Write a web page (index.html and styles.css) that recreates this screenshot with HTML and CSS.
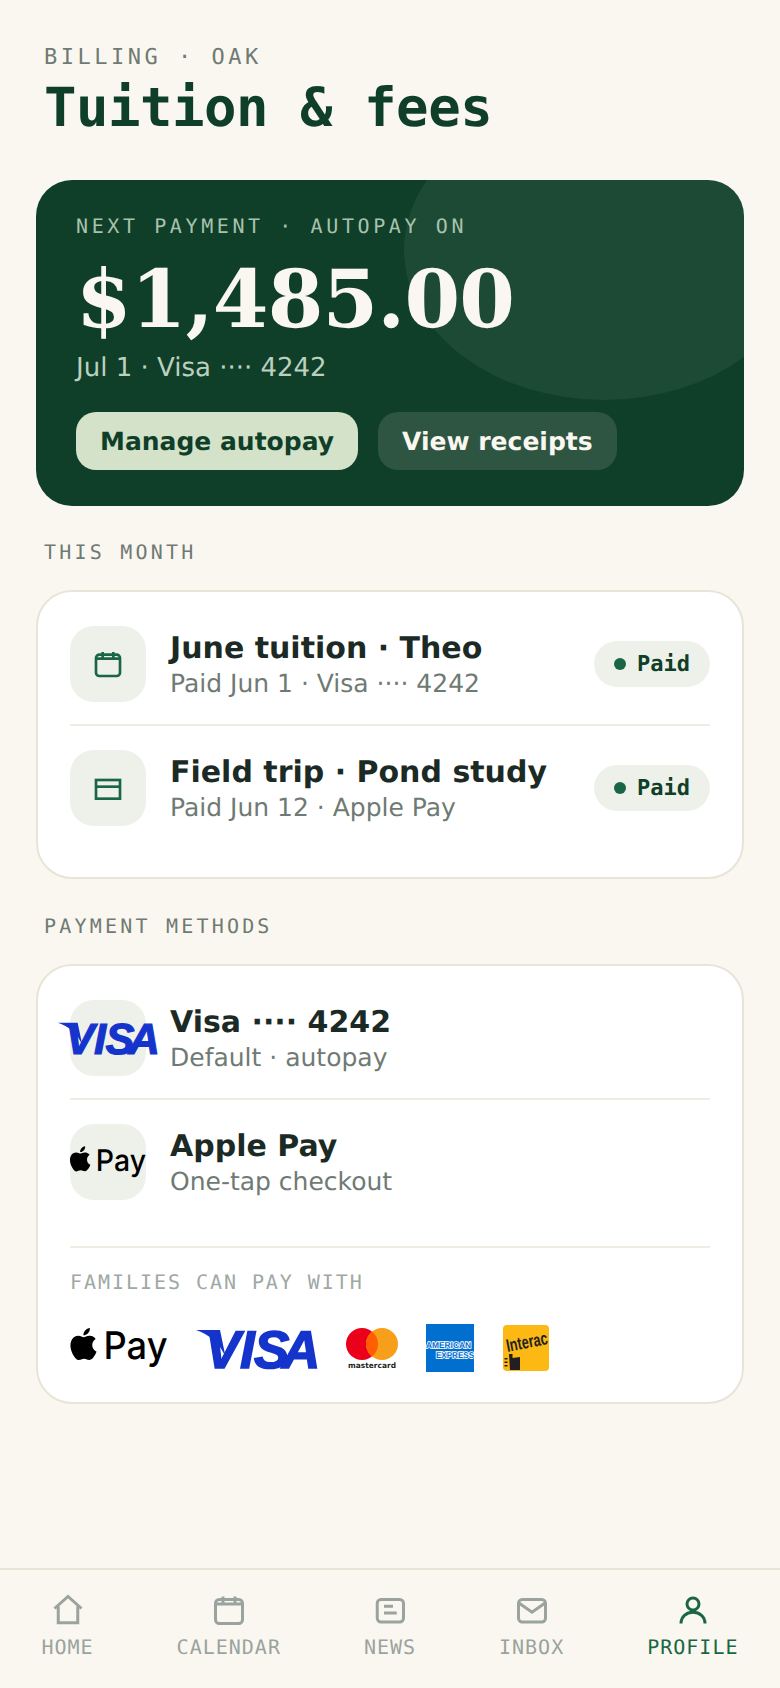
FILE: index.html
```html
<!DOCTYPE html>
<html lang="en">
<head>
    <meta charset="UTF-8">
    <title>Tuition &amp; fees</title>
    <meta name="viewport" content="width=device-width, initial-scale=1">
    <link rel="stylesheet" href="styles.css">
</head>
<body>
    <header class="page-head">
        <p class="eyebrow">BILLING · OAK</p>
        <h1>Tuition &amp; fees</h1>
    </header>

    <main class="content">
        <section class="hero">
            <div class="hero-blob"></div>
            <p class="hero-label">NEXT PAYMENT · AUTOPAY ON</p>
            <p class="hero-amount">$1,485.00</p>
            <p class="hero-sub">Jul 1 · Visa ···· 4242</p>
            <div class="hero-actions">
                <a class="btn btn-light">Manage autopay</a>
                <a class="btn btn-dark">View receipts</a>
            </div>
        </section>

        <h2 class="section-label">THIS MONTH</h2>
        <section class="card card-month">
            <div class="row">
                <div class="row-icon">
                    <svg class="icon-row" viewBox="0 0 24 24"><rect x="3" y="5" width="18" height="16" rx="2.5"/><path d="M3 8h18M8 3v4M16 3v4"/></svg>
                </div>
                <div class="row-text">
                    <div class="row-title">June tuition · Theo</div>
                    <div class="row-sub">Paid Jun 1 · Visa ···· 4242</div>
                </div>
                <span class="pill"><i class="dot"></i>Paid</span>
            </div>
            <div class="row">
                <div class="row-icon">
                    <svg class="icon-row" viewBox="0 0 24 24"><rect x="3" y="6" width="18" height="14"/><path d="M3 11h18"/></svg>
                </div>
                <div class="row-text">
                    <div class="row-title">Field trip · Pond study</div>
                    <div class="row-sub">Paid Jun 12 · Apple Pay</div>
                </div>
                <span class="pill"><i class="dot"></i>Paid</span>
            </div>
        </section>

        <h2 class="section-label">PAYMENT METHODS</h2>
        <section class="card card-methods">
            <div class="row">
                <div class="row-icon">
                    <svg class="logo-visa-sm" viewBox="0 0 122 39">
                        <path class="visa-flag" d="M0 1H24L30 30C25 14 12 5 0 1Z"/>
                        <text class="visa-text" x="9 44 58 86" y="38.5">VISA</text>
                    </svg>
                </div>
                <div class="row-text">
                    <div class="row-title">Visa ···· 4242</div>
                    <div class="row-sub">Default · autopay</div>
                </div>
            </div>
            <div class="row">
                <div class="row-icon">
                    <svg class="logo-apple-sm" viewBox="0 0 97 40">
                        <path transform="translate(-3 0) scale(1.333)" d="M12.152 6.896c-.948 0-2.415-1.078-3.96-1.04-2.04.027-3.91 1.183-4.961 3.014-2.117 3.675-.546 9.103 1.519 12.09 1.013 1.454 2.208 3.09 3.792 3.039 1.52-.065 2.09-.987 3.935-.987 1.831 0 2.35.987 3.96.948 1.637-.026 2.676-1.48 3.676-2.948 1.156-1.688 1.636-3.325 1.662-3.415-.039-.013-3.182-1.221-3.22-4.857-.026-3.04 2.48-4.494 2.597-4.559-1.429-2.09-3.623-2.324-4.39-2.376-2-.156-3.675 1.09-4.61 1.09zM15.53 3.83c.843-1.012 1.4-2.427 1.245-3.83-1.207.052-2.662.805-3.532 1.818-.78.896-1.454 2.338-1.273 3.714 1.338.104 2.715-.688 3.559-1.701"/>
                        <text class="apple-text" x="33" y="31" textLength="64" lengthAdjust="spacingAndGlyphs">Pay</text>
                    </svg>
                </div>
                <div class="row-text">
                    <div class="row-title">Apple Pay</div>
                    <div class="row-sub">One-tap checkout</div>
                </div>
            </div>
            <div class="accepts">
                <div class="accepts-label">FAMILIES CAN PAY WITH</div>
                <div class="accepts-logos">
                    <svg class="logo-apple" viewBox="0 0 97 40">
                        <path transform="translate(-3 0) scale(1.333)" d="M12.152 6.896c-.948 0-2.415-1.078-3.96-1.04-2.04.027-3.91 1.183-4.961 3.014-2.117 3.675-.546 9.103 1.519 12.09 1.013 1.454 2.208 3.09 3.792 3.039 1.52-.065 2.09-.987 3.935-.987 1.831 0 2.35.987 3.96.948 1.637-.026 2.676-1.48 3.676-2.948 1.156-1.688 1.636-3.325 1.662-3.415-.039-.013-3.182-1.221-3.22-4.857-.026-3.04 2.48-4.494 2.597-4.559-1.429-2.09-3.623-2.324-4.39-2.376-2-.156-3.675 1.09-4.61 1.09zM15.53 3.83c.843-1.012 1.4-2.427 1.245-3.83-1.207.052-2.662.805-3.532 1.818-.78.896-1.454 2.338-1.273 3.714 1.338.104 2.715-.688 3.559-1.701"/>
                        <text class="apple-text" x="33" y="31" textLength="64" lengthAdjust="spacingAndGlyphs">Pay</text>
                    </svg>
                    <svg class="logo-visa" viewBox="0 0 122 39">
                        <path class="visa-flag" d="M0 1H24L30 30C25 14 12 5 0 1Z"/>
                        <text class="visa-text" x="9 44 58 86" y="38.5">VISA</text>
                    </svg>
                    <svg class="logo-mc" viewBox="0 0 52 48">
                        <circle cx="16" cy="20" r="16" fill="#eb001b"/>
                        <circle cx="36" cy="20" r="16" fill="#f79e1b"/>
                        <path d="M26 7.5a16 16 0 0 1 0 25a16 16 0 0 1 0-25z" fill="#ff5f00"/>
                        <text class="mc-text" x="2" y="44" textLength="48" lengthAdjust="spacingAndGlyphs">mastercard</text>
                    </svg>
                    <svg class="logo-amex" viewBox="0 0 48 48">
                        <rect width="48" height="48" fill="#016fd0"/>
                        <text class="amex-text" x="0" y="23.5" textLength="45" lengthAdjust="spacingAndGlyphs">AMERICAN</text>
                        <text class="amex-text" x="10" y="33.5" textLength="38" lengthAdjust="spacingAndGlyphs">EXPRESS</text>
                    </svg>
                    <svg class="logo-interac" viewBox="0 0 46 46">
                        <rect width="46" height="46" rx="4" fill="#fdb913"/>
                        <text class="interac-text" transform="rotate(-11 4 25)" x="4" y="27" textLength="42" lengthAdjust="spacingAndGlyphs">Interac</text>
                        <path class="interac-hand" d="M6 29H9.5V33L17 32V45H7ZM1.5 33H4.5V34.5H1.5ZM1.5 36.5H4.5V38H1.5ZM1.5 40H4.5V41.5H1.5Z"/>
                    </svg>
                </div>
            </div>
        </section>
    </main>

    <nav class="tabbar">
        <a class="tab">
            <svg class="icon-tab" viewBox="0 0 24 24"><path d="M3 11L12 3L21 11M5.5 9.5V20.5H18.5V9.5"/></svg>
            HOME
        </a>
        <a class="tab">
            <svg class="icon-tab" viewBox="0 0 24 24"><rect x="3" y="5" width="18" height="16" rx="2.5"/><path d="M3 8h18M8 3v4M16 3v4"/></svg>
            CALENDAR
        </a>
        <a class="tab">
            <svg class="icon-tab" viewBox="0 0 24 24"><rect x="3.5" y="5" width="17.5" height="15" rx="2.5"/><path d="M8 9.5h6M8 14h8.5"/></svg>
            NEWS
        </a>
        <a class="tab">
            <svg class="icon-tab" viewBox="0 0 24 24"><rect x="3" y="5" width="18" height="15" rx="2.5"/><path d="M3.5 7.5L12 13.5L20.5 7.5"/></svg>
            INBOX
        </a>
        <a class="tab tab-active">
            <svg class="icon-tab" viewBox="0 0 24 24"><circle cx="12" cy="8" r="4"/><path d="M4 21c0-4.5 3.5-7.5 8-7.5s8 3 8 7.5"/></svg>
            PROFILE
        </a>
    </nav>
</body>
</html>
```

FILE: styles.css
```css
* {
    box-sizing: border-box;
}

html,
body {
    margin: 0;
    height: 100%;
}

body {
    display: flex;
    flex-direction: column;
    min-height: 1688px;
    background: #faf7f0;
    color: #1c2a25;
    font-family: "DejaVu Sans", sans-serif;
    text-rendering: geometricPrecision;
}

svg {
    overflow: visible;
}

p,
h1,
h2 {
    margin: 0;
}

.page-head {
    padding: 44px 44px 0;
}

.eyebrow {
    font-family: "DejaVu Sans Mono", monospace;
    font-size: 22px;
    line-height: 28px;
    letter-spacing: 3.5px;
    color: #6f7a74;
}

h1 {
    margin-top: 4px;
    font-family: "DejaVu Sans Mono", monospace;
    font-size: 54px;
    line-height: 64px;
    font-weight: bold;
    letter-spacing: -0.5px;
    color: #0f3f28;
}

.content {
    padding: 40px 36px 0;
}

.hero {
    position: relative;
    overflow: hidden;
    height: 326px;
    margin-bottom: 32px;
    padding: 32px 40px 0;
    background: #0f3f28;
    border-radius: 36px;
}

.hero-blob {
    position: absolute;
    top: -80px;
    right: -60px;
    width: 400px;
    height: 300px;
    border-radius: 50%;
    background: rgba(255, 255, 255, 0.06);
}

.hero-label,
.hero-amount,
.hero-sub,
.hero-actions {
    position: relative;
}

.hero-label {
    font-family: "DejaVu Sans Mono", monospace;
    font-size: 20px;
    line-height: 28px;
    letter-spacing: 3.6px;
    color: #a9c2ae;
}

.hero-amount {
    margin-top: 13px;
    font-family: "DejaVu Serif", serif;
    font-size: 80px;
    line-height: 92px;
    font-weight: bold;
    letter-spacing: -0.8px;
    color: #faf7f0;
}

.hero-sub {
    margin-top: 5px;
    font-size: 26px;
    line-height: 36px;
    color: #bcd0bf;
}

.hero-actions {
    display: flex;
    gap: 20px;
    margin-top: 26px;
}

.btn {
    padding: 0 24px;
    height: 58px;
    line-height: 59px;
    border-radius: 20px;
    font-size: 25px;
    font-weight: bold;
}

.btn-light {
    background: #d3e2c8;
    color: #0f3f28;
}

.btn-dark {
    background: #2d5541;
    color: #faf7f0;
}

.section-label {
    margin: 0 8px 24px;
    font-family: "DejaVu Sans Mono", monospace;
    font-size: 20px;
    line-height: 28px;
    font-weight: normal;
    letter-spacing: 3.2px;
    color: #6f7a74;
}

.card {
    padding: 10px 32px 29px;
    background: #fff;
    border: 2px solid #e8e4d8;
    border-radius: 36px;
}

.card-month {
    margin-bottom: 33px;
}

.row {
    display: flex;
    align-items: center;
    gap: 24px;
    padding: 24px 0 22px;
}

.row + .row {
    border-top: 2px solid #f0ece2;
}

.row-icon {
    display: flex;
    flex: none;
    align-items: center;
    justify-content: center;
    width: 76px;
    height: 76px;
    background: #eef1ea;
    border-radius: 24px;
}

.icon-row {
    width: 32px;
    height: 32px;
    fill: none;
    stroke: #1a6644;
    stroke-width: 2;
}

.row-text {
    flex: 1;
}

.row-title {
    margin-top: 2px;
    font-size: 30px;
    line-height: 38px;
    font-weight: bold;
}

.row-sub {
    margin-top: -1px;
    font-size: 25px;
    line-height: 34px;
    color: #6f7a74;
}

.pill {
    display: flex;
    align-items: center;
    gap: 11px;
    height: 46px;
    padding: 0 20px;
    background: #eef1ea;
    border-radius: 23px;
    font-family: "DejaVu Sans Mono", monospace;
    font-size: 22px;
    font-weight: bold;
    color: #0f3f28;
}

.dot {
    width: 12px;
    height: 12px;
    background: #1a6644;
    border-radius: 50%;
}

.card-methods {
    padding-bottom: 0;
}

.logo-visa-sm {
    flex: none;
    width: 100px;
    height: 32px;
    margin: 0 -12px;
}

.logo-apple-sm {
    flex: none;
    width: 76px;
    height: 32px;
}

.visa-flag {
    fill: #1434cb;
}

.visa-text {
    font-family: "Liberation Sans", sans-serif;
    font-size: 53px;
    font-style: italic;
    font-weight: bold;
    fill: #1434cb;
    stroke: #1434cb;
    stroke-width: 1.5;
}

.apple-text {
    font-family: Inter, sans-serif;
    font-size: 38px;
    font-weight: 500;
    fill: #000;
}

.accepts {
    margin-top: 24px;
    padding: 20px 0 30px;
    border-top: 2px solid #f0ece2;
}

.accepts-label {
    font-family: "DejaVu Sans Mono", monospace;
    font-size: 20px;
    line-height: 28px;
    letter-spacing: 1.95px;
    color: #a0a8a3;
}

.accepts-logos {
    display: flex;
    align-items: center;
    gap: 28px;
    margin-top: 28px;
}

.logo-apple {
    flex: none;
    width: 98px;
    height: 40px;
}

.logo-visa {
    flex: none;
    width: 122px;
    height: 39px;
}

.logo-mc {
    flex: none;
    width: 52px;
    height: 48px;
}

.mc-text {
    font-family: "DejaVu Sans", sans-serif;
    font-size: 7.5px;
    font-weight: bold;
    fill: #231f20;
}

.logo-amex {
    flex: none;
    width: 48px;
    height: 48px;
}

.amex-text {
    font-family: "Liberation Sans", sans-serif;
    font-size: 8.5px;
    font-weight: bold;
    fill: #016fd0;
    stroke: #fff;
    stroke-width: 1.6;
    paint-order: stroke;
}

.logo-interac {
    flex: none;
    width: 46px;
    height: 46px;
    margin-left: 1px;
}

.interac-text {
    font-family: "Liberation Sans", sans-serif;
    font-size: 18px;
    font-weight: bold;
    fill: #231f20;
}

.interac-hand {
    fill: #231f20;
}

.tabbar {
    display: flex;
    justify-content: space-around;
    height: 120px;
    margin-top: auto;
    padding-top: 22px;
    border-top: 2px solid #e8e4d8;
}

.tab {
    display: flex;
    flex-direction: column;
    align-items: center;
    font-family: "DejaVu Sans Mono", monospace;
    font-size: 20px;
    line-height: 28px;
    letter-spacing: 1px;
    color: #9aa39e;
}

.tab-active {
    color: #1a6644;
}

.icon-tab {
    width: 36px;
    height: 36px;
    margin-bottom: 5px;
    fill: none;
    stroke: currentColor;
    stroke-width: 2;
}
```
